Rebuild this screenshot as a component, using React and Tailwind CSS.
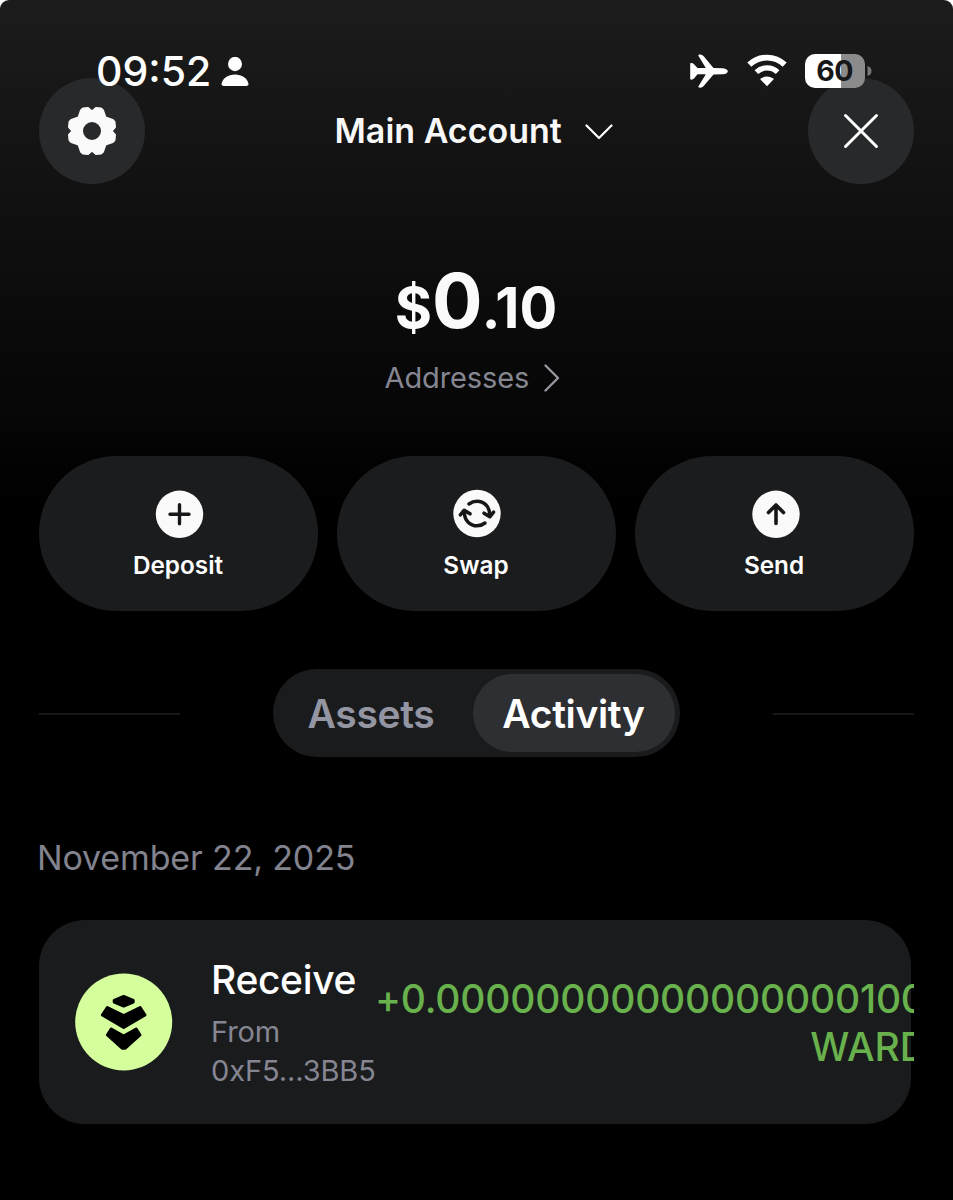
import React from 'react';

const ACTIONS = [
  { label: 'Deposit', icon: <DepositIcon /> },
  { label: 'Swap', icon: <SwapIcon /> },
  { label: 'Send', icon: <SendIcon /> },
];

function DepositIcon() {
  return (
    <svg className="size-12 overflow-visible" viewBox="0 0 48 48" fill="none">
      <circle cx="24.5" cy="24.3" r="23.7" fill="#fafafa" />
      <path d="M24.5 14.800v19M15 24.300h19" stroke="#17171a" strokeWidth="3.4" strokeLinecap="round" />
    </svg>
  );
}

function SwapIcon() {
  return (
    <svg className="size-12 overflow-visible" viewBox="0 0 48 48" fill="none">
      <circle cx="24" cy="23.5" r="23.7" fill="#fafafa" />
      <g stroke="#17171a" strokeWidth="3.5" strokeLinecap="round" strokeLinejoin="round">
        <path d="M16 14c2.500-1.900 5.200-2.800 8-2.800c7 0 12.500 5.500 12.500 12.500v2" />
        <path d="M31 23.200l5.800 3.600l3.800-4.600" />
        <path d="M32 33c-2.500 1.900-5.200 2.800-8 2.800c-7 0-12.500-5.500-12.500-12.500v-2" />
        <path d="M7.400 24.800l3.800-4.600l5.800 3.600" />
      </g>
    </svg>
  );
}

function SendIcon() {
  return (
    <svg className="size-12 overflow-visible" viewBox="0 0 48 48" fill="none">
      <circle cx="25" cy="24.3" r="23.7" fill="#fafafa" />
      <path d="M25 33.500v-18.500M17.500 22.500l7.500-7.500l7.500 7.500" stroke="#17171a" strokeWidth="3.6" strokeLinecap="round" strokeLinejoin="round" />
    </svg>
  );
}

function GearIcon() {
  return (
    <svg className="size-12 overflow-visible" viewBox="0 0 48 48">
      <path
        fill="#fafafa"
        stroke="#fafafa"
        strokeWidth="2"
        strokeLinejoin="round"
        fillRule="evenodd"
        d="M13 3.300L15 1.500L20 1L24 4.500L28 1L33 1.500L35 3.300L37.500 10.500L44.700 13L46.500 15L47 20L43.500 24L47 28L46.500 33L44.700 35L37.500 37.500L35 44.700L33 46.500L28 47L24 43.500L20 47L15 46.500L13 44.700L10.500 37.500L3.300 35L1.500 33L1 28L4.500 24L1 20L1.500 15L3.300 13L10.500 10.500ZM24 14a10 10 0 1 0 0 20a10 10 0 1 0 0-20Z"
      />
    </svg>
  );
}

function StatusBar() {
  return (
    <div className="relative z-10 flex h-[88px] items-start justify-between pt-[54px] pr-[81px] pl-[96px]">
      <div className="flex items-start">
        <span className="w-[125px] text-[41px] leading-[34px] font-medium whitespace-nowrap">09:52</span>
        <svg className="mt-[3px] h-[29px] w-[28px]" viewBox="0 0 28 29" fill="#fff">
          <ellipse cx="14" cy="7" rx="7" ry="7.200" />
          <path d="M3 29C1 29 .3 28 .6 26.500C2 21 7 17.500 14 17.500S26 21 27.400 26.500C27.700 28 27 29 25 29Z" />
        </svg>
      </div>
      <div className="flex items-start">
        <svg className="h-[34px] w-[38px]" viewBox="0 0 38 34" fill="#fff">
          <path d="M.2 9.300Q2.300 8.300 4 10.200L7.500 14L15.800 14L8.500 2Q7.700 .7 9.300 .6Q12 .2 13.700 2.200L23.500 14L33 14.200Q37.800 15 37.800 17.200Q37.800 19.600 33 20.300L23.500 20.500L13.700 32Q12 34 9.300 33.600Q7.700 33.500 8.500 32.200L15.800 20.300L7.500 20.300L4 24.500Q2.300 26.300 .2 25.300Z" />
        </svg>
        <svg className="ml-[18px] h-[34px] w-[42px]" viewBox="0 0 42 34" fill="none">
          <path d="M3.300 10.700A25.500 25.500 0 0 1 38.700 10.700" stroke="#fff" strokeWidth="5.800" />
          <path d="M10.400 18.100A15.500 15.500 0 0 1 31.600 18.100" stroke="#fff" strokeWidth="5.400" />
          <path d="M21 32.300L14.500 25.500Q14.200 25 14.700 24.600Q21 20.300 27.300 24.600Q27.800 25 27.500 25.500Z" fill="#fff" />
        </svg>
        <div className="ml-[17px] flex h-[34px] w-[60px] items-center justify-center rounded-[10px] bg-linear-to-r from-white from-60% to-[#8b8b8b] to-60% pr-px text-[28.5px] tracking-[-0.5px] font-bold text-[#17171a]">
          60
        </div>
        <svg className="mt-[11px] ml-[2px] h-3 w-[5px]" viewBox="0 0 5 12">
          <path d="M.5 1Q4.500 2 4.500 6T.5 11Z" fill="#777" />
        </svg>
      </div>
    </div>
  );
}

export default function App() {
  return (
    <div className="bg-white">
      <div className="h-[1200px] w-[953px] overflow-hidden rounded-t-[9px] bg-black bg-linear-to-b from-[#1c1c1c] via-[#060606] via-35% to-black to-48% font-['Inter',sans-serif] text-white">
        <StatusBar />

        <header className="-mt-[10px] flex items-center justify-between px-[39px]">
          <button className="flex size-[106px] items-center justify-center rounded-full bg-[#28292b]">
            <GearIcon />
          </button>
          <button className="flex items-center pr-[6px]">
            <span className="w-[250px] text-left text-[34px] leading-[40px] font-semibold whitespace-nowrap text-[#f8f8f8]">Main Account</span>
            <svg className="mt-px h-4 w-7" viewBox="0 0 28 16" fill="none">
              <path d="M1.500 1.500L14 14L26.500 1.500" stroke="#fff" strokeWidth="2.200" strokeLinecap="round" strokeLinejoin="round" />
            </svg>
          </button>
          <button className="flex size-[106px] items-center justify-center rounded-full bg-[#28292b]">
            <svg className="size-9" viewBox="0 0 36 36">
              <path d="M2.500 2.500L33.500 33.500M33.500 2.500L2.500 33.500" stroke="#fff" strokeWidth="3" strokeLinecap="round" />
            </svg>
          </button>
        </header>

        <section className="mt-[75px] flex flex-col items-center">
          <div className="flex h-[84px] items-baseline pr-px font-bold text-[#fafafa]">
            <span className="text-[57px] leading-[84px]">$</span>
            <span className="text-[75px] leading-[84px]">0</span>
            <span className="-ml-px text-[56px] leading-[84px]">.10</span>
          </div>
          <button className="mt-[15px] flex h-10 items-center pr-[9px] text-[#858692]">
            <span className="w-[159px] text-left text-[29px] tracking-[-0.1px] whitespace-nowrap">Addresses</span>
            <svg className="h-7 w-4" viewBox="0 0 16 28" fill="none">
              <path d="M1.500 1.500L14 14L1.500 26.500" stroke="#96979f" strokeWidth="2.400" strokeLinecap="round" strokeLinejoin="round" />
            </svg>
          </button>
        </section>

        <div className="mt-[58px] grid grid-cols-3 gap-[19px] px-[39px]">
          {ACTIONS.map(action => (
            <button
              key={action.label}
              className="flex h-[155px] flex-col items-center rounded-full bg-[#1b1c1e] pt-[34px]"
            >
              {action.icon}
              <span className="mt-[9px] pr-px text-[24.3px] leading-[36px] font-semibold">{action.label}</span>
            </button>
          ))}
        </div>

        <div className="mt-[58px] flex items-center justify-between px-[39px]">
          <div className="mt-[2px] h-[2px] w-[141px] bg-[#18181a]" />
          <div className="flex h-[88px] w-[407px] items-center rounded-full bg-[#1a1b1d] p-[5px] text-[39px] font-semibold">
            <button className="h-[78px] flex-1 pt-[2px] pr-[9px] tracking-[-0.35px] text-[#9395a2]">Assets</button>
            <button className="h-[78px] w-[202px] rounded-full bg-[#2e2f33] pt-[2px] pr-px tracking-[-0.35px]">Activity</button>
          </div>
          <div className="mt-[2px] h-[2px] w-[141px] bg-[#18181a]" />
        </div>

        <h2 className="mt-[80px] ml-[37px] text-[34px] leading-[42px] tracking-[-0.15px] text-[#82838e]">November 22, 2025</h2>

        <div className="mt-[41px] mr-[39px] ml-[39px] overflow-hidden">
          <div className="mr-[3px] flex h-[204px] items-center rounded-[46px] bg-[#1a1b1d] pl-9">
            <svg className="size-[98px] shrink-0" viewBox="0 0 98 98">
              <circle cx="48.700" cy="49" r="48.500" fill="#d5ff9c" />
              <g fill="#000" stroke="#000" strokeWidth="3" strokeLinejoin="round">
                <path d="M48.700 23.500L58.200 27.300V29L48.700 33L39.200 29V27.300Z" />
                <path d="M32.300 34.500L48.700 42.500L65.100 34.500L70 42L48.700 54.500L27.400 42Z" />
                <path d="M36.200 56L48.700 63L61.200 56L65 62L50 75.300H47.400L32.400 62Z" />
              </g>
            </svg>
            <div className="mt-px ml-[38px] w-[164px] shrink-0 whitespace-nowrap">
              <div className="text-[39px] leading-[48px] font-medium tracking-[-0.35px]">Receive</div>
              <div className="mt-[8px] text-[29px] leading-[39px] tracking-[-0.1px] text-[#858692]">
                From
                <br />
                0xF5...3BB5
              </div>
            </div>
            <div className="mt-[2px] w-[553px] shrink-0 text-right text-[39px] leading-[48px] font-medium whitespace-nowrap text-[#68b14c]">
              <div className="mr-[6px] tracking-[-0.2px]">+0.00000000000000000100</div>
              <div>WARD</div>
            </div>
          </div>
        </div>
      </div>
    </div>
  );
}
